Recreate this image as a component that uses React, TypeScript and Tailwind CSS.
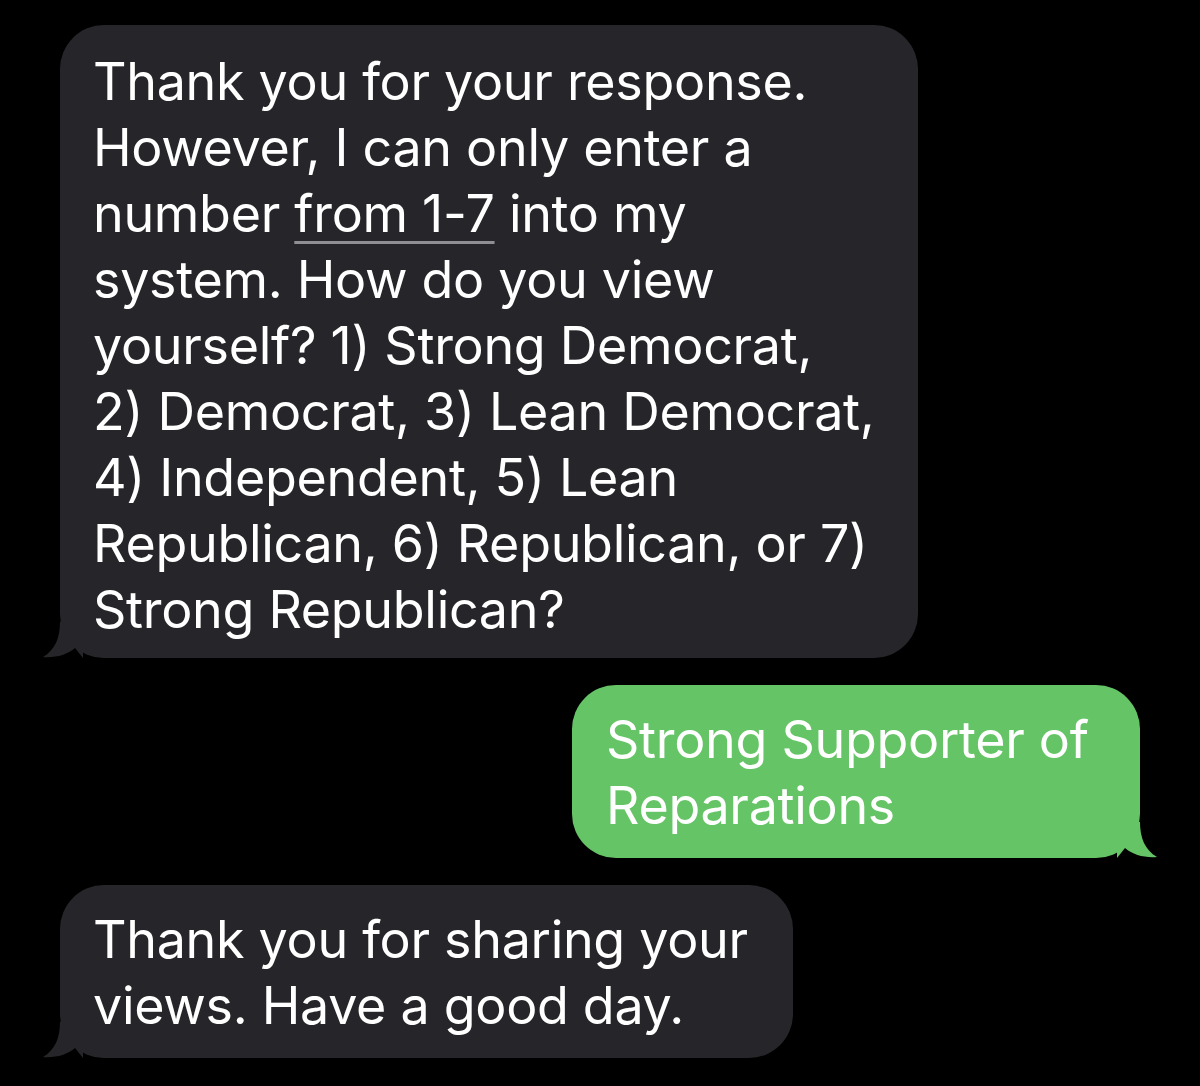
import type { ReactNode } from "react";

const font = { fontFamily: "Inter, 'Noto Sans', sans-serif" };

function Tail({ side, color }: { side: "left" | "right"; color: string }) {
  // little hook at the bottom corner of the bubble
  if (side === "left") {
    return (
      <svg
        className="absolute bottom-0 left-[-17px]"
        width="40"
        height="36"
        viewBox="0 0 40 36"
        aria-hidden="true"
      >
        <path d="M17 0 C17 16 12 28 0 35 C12 36 24 33 32 26 L40 36 L40 0 Z" fill={color} />
      </svg>
    );
  }
  return (
    <svg
      className="absolute bottom-0 right-[-17px]"
      width="40"
      height="36"
      viewBox="0 0 40 36"
      aria-hidden="true"
    >
      <path d="M23 0 C23 16 28 28 40 35 C28 36 16 33 8 26 L0 36 L0 0 Z" fill={color} />
    </svg>
  );
}

function Bubble({
  lines,
  side,
  className,
}: {
  lines: ReactNode[];
  side: "left" | "right";
  className: string;
}) {
  const color = side === "left" ? "#262529" : "#65c466";
  return (
    <div className={`relative rounded-[44px] ${className}`}>
      <Tail side={side} color={color} />
      <div className="relative text-white text-[52px] leading-[66px] tracking-[-0.3px]" style={font}>
        {lines.map((l, i) => (
          <div key={i} className="whitespace-nowrap">
            {l}
          </div>
        ))}
      </div>
    </div>
  );
}

export default function App() {
  return (
    <div className="w-[1200px] h-[1086px] bg-black overflow-hidden flex flex-col gap-[27px] pt-[25px]">
      <Bubble
        side="left"
        className="ml-[60px] w-[858px] h-[633px] bg-[#262529] pl-[33px] pt-[24px]"
        lines={[
          "Thank you for your response.",
          "However, I can only enter a",
          <>
            number{" "}
            <span className="underline decoration-[#8e8e93] decoration-[3px] underline-offset-[9px]">
              from 1-7
            </span>{" "}
            into my
          </>,
          "system. How do you view",
          "yourself? 1) Strong Democrat,",
          "2) Democrat, 3) Lean Democrat,",
          "4) Independent, 5) Lean",
          "Republican, 6) Republican, or 7)",
          "Strong Republican?",
        ]}
      />
      <Bubble
        side="right"
        className="self-end mr-[60px] w-[568px] h-[173px] bg-[#65c466] pl-[34px] pt-[22px]"
        lines={["Strong Supporter of", "Reparations"]}
      />
      <Bubble
        side="left"
        className="ml-[60px] w-[733px] h-[173px] bg-[#262529] pl-[33px] pt-[22px]"
        lines={["Thank you for sharing your", "views. Have a good day."]}
      />
    </div>
  );
}
